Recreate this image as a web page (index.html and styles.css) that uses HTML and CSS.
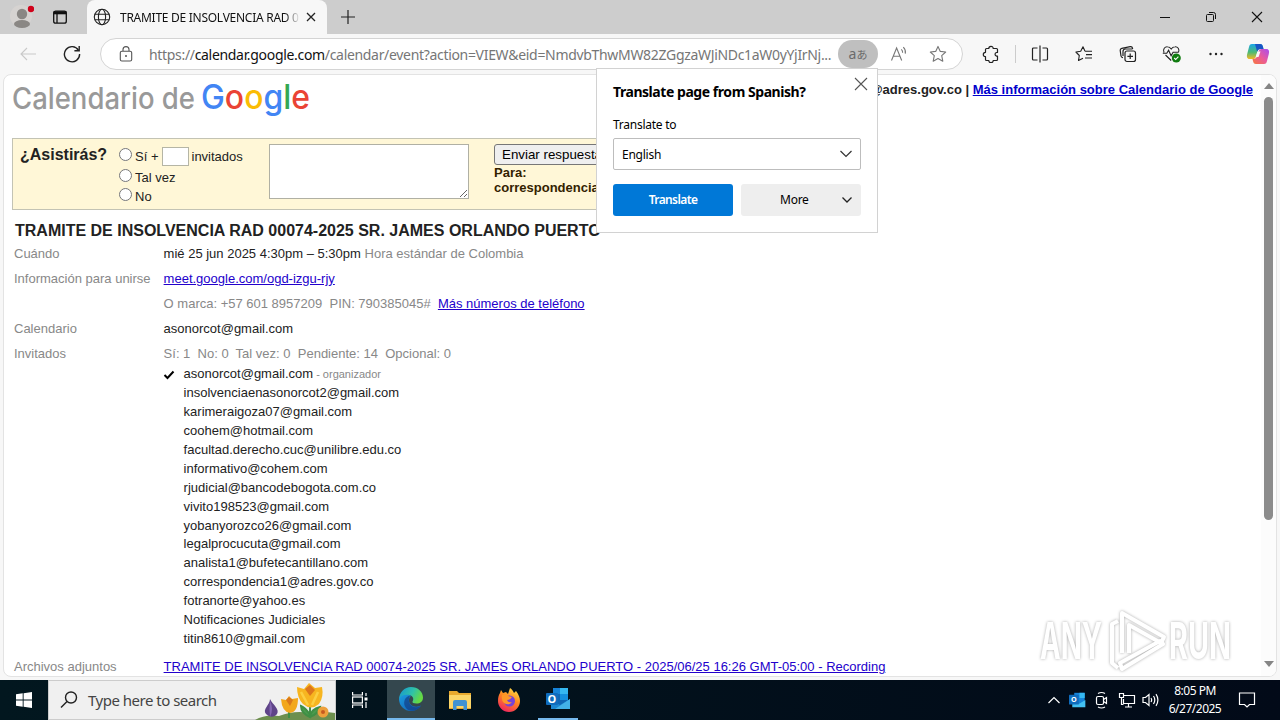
FILE: index.html
```html
<!DOCTYPE html>
<html lang="es">
<head>
    <meta charset="UTF-8">
    <meta name="viewport" content="width=device-width, initial-scale=1.0">
    <title>Calendario de Google</title>
    <link rel="stylesheet" href="styles.css">
</head>
<body>
    <div class="tabs">
        <div class="profile">
            <svg width="24" height="28" viewBox="0 0 24 28"><circle cx="11" cy="13" r="11" fill="#d6d3d1"/><circle cx="12" cy="11" r="5.2" fill="#8a8784"/><ellipse cx="12" cy="21" rx="8" ry="4" fill="#8a8784"/><circle cx="21" cy="6" r="3.2" fill="#d0021b"/></svg>
        </div>
        <div class="tab-menu">
            <svg width="16" height="16" viewBox="0 0 16 16"><rect x="1.7" y="2.2" width="12.6" height="12" rx="2" fill="none" stroke="#111" stroke-width="1.3"/><path d="M1.5 3.8h13" stroke="#111" stroke-width="3"/><path d="M5 5v9" stroke="#111" stroke-width="1.3"/></svg>
        </div>
        <div class="tab">
            <svg class="globe" width="18" height="18" viewBox="0 0 18 18" fill="none" stroke="#222" stroke-width="1.1"><circle cx="9" cy="9" r="7.7"/><ellipse cx="9" cy="9" rx="3.6" ry="7.7"/><path d="M1.8 6.3h14.4M1.8 11.7h14.4"/></svg>
            <span class="tab-title">TRAMITE DE INSOLVENCIA RAD 0</span>
            <svg class="tab-close" width="10" height="10" viewBox="0 0 10 10" stroke="#222" stroke-width="1.3"><path d="M1 1l8 8M9 1l-8 8"/></svg>
        </div>
        <svg class="new-tab" width="14" height="14" viewBox="0 0 14 14" stroke="#222" stroke-width="1.2"><path d="M7 0v14M0 7h14"/></svg>
        <div class="window-buttons">
            <div><svg width="12" height="12" viewBox="0 0 12 12" stroke="#111"><path d="M1 6.5h10"/></svg></div>
            <div><svg width="12" height="12" viewBox="0 0 12 12" stroke="#111" fill="none"><rect x="1.5" y="3.5" width="7" height="7" rx="1"/><path d="M4 1.5h4.5a2 2 0 0 1 2 2V8"/></svg></div>
            <div><svg width="12" height="12" viewBox="0 0 12 12" stroke="#111" stroke-width="1.1"><path d="M1 1l10 10M11 1L1 11"/></svg></div>
        </div>
    </div>

    <div class="toolbar">
        <div class="tool back"><svg width="18" height="18" viewBox="0 0 18 18" fill="none" stroke="#c9c9c9" stroke-width="1.1"><path d="M17 9H2M8 3L2 9l6 6"/></svg></div>
        <div class="tool"><svg width="18" height="18" viewBox="0 0 18 18" fill="none" stroke="#222" stroke-width="1.4"><path d="M15.5 5.3A7.6 7.6 0 1 0 16.6 9"/><path d="M16.2 1v4.8h-4.8"/></svg></div>
        <div class="address">
            <svg class="lock" width="14" height="16" viewBox="0 0 14 16" fill="none" stroke="#555" stroke-width="1.1"><rect x="1.3" y="5.2" width="11.4" height="9.8" rx="1.6"/><path d="M4 5V3.6a3 3 0 0 1 6 0V5"/><circle cx="7" cy="10" r="1" fill="#555" stroke="none"/></svg>
            <span class="url">https://<b>calendar.google.com</b>/calendar/event?action=VIEW&amp;eid=NmdvbThwMW82ZGgzaWJiNDc1aW0yYjIrNj...</span>
            <div class="translate-badge"><span>a</span><span class="kana">あ</span></div>
            <svg class="read" width="18" height="16" viewBox="0 0 18 16" fill="none" stroke="#777" stroke-width="1.1"><path d="M1.5 14.5L6.6 2l5.1 12.5M3.2 10.2h6.8M11.3 3.4a4 4 0 0 1 1.3 3.4M13.3 1.2a7 7 0 0 1 2 6.4"/></svg>
            <svg class="star" width="18" height="18" viewBox="0 0 18 18" fill="none" stroke="#777" stroke-width="1.1"><path d="M9 1.4l2.3 5 5.4.6-4 3.7 1.1 5.5L9 13.5l-4.8 2.7 1.1-5.5-4-3.7 5.4-.6z" stroke-linejoin="round"/></svg>
        </div>
        <div class="tool wide"><svg width="18" height="18" viewBox="0 0 18 18" fill="none" stroke="#222" stroke-width="1.2" stroke-linejoin="round"><path d="M4.500 3.500h2.300a2.200 2.200 0 0 1 4.400 0h3.300a1 1 0 0 1 1 1v3h-1a1.900 1.900 0 0 0 0 3.700h1v3.300a1 1 0 0 1-1 1h-3.300a2.200 2.200 0 0 1-4.400 0H4.500a1 1 0 0 1-1-1v-2.800a2.200 2.200 0 0 1 0-4.400V4.500a1 1 0 0 1 1-1z"/></svg></div>
        <div class="line"></div>
        <div class="tool wide"><svg width="18" height="18" viewBox="0 0 18 18" fill="none" stroke="#222" stroke-width="1.2"><path d="M6.5 3h-4a1 1 0 0 0-1 1v10a1 1 0 0 0 1 1h4M11.500 3h4a1 1 0 0 1 1 1v10a1 1 0 0 1-1 1h-4M9 .5v17"/></svg></div>
        <div class="tool wide"><svg width="18" height="18" viewBox="0 0 18 18" fill="none" stroke="#222" stroke-width="1.1" stroke-linejoin="round"><path d="M10 6.300L8 1.700 5.700 6.300.9 7l3.400 3.500-.8 5L8 13.200M10 6.300h7M11 9.600h6M10 13h7"/></svg></div>
        <div class="tool wide"><svg width="18" height="18" viewBox="0 0 18 18" fill="none" stroke="#222" stroke-width="1.2"><rect x="6" y="6" width="10.500" height="10.500" rx="2"/><path d="M11.200 8.500v5.600M8.400 11.300H14M4 12.600a2 2 0 0 1-2-1.600L1.200 5.500a2 2 0 0 1 1.600-2.200l8.400-1.700a2 2 0 0 1 2.300 1.600l.1.800M4 11V6.500a2.500 2.500 0 0 1 2.500-2.500h7"/></svg></div>
        <div class="tool wide"><svg width="20" height="18" viewBox="0 0 20 18" fill="none" stroke="#222" stroke-width="1.1"><path d="M2 7.500C.5 4 3 1.500 5.500 1.700 7.300 1.800 8.500 3 9.200 4c.8-1.200 2-2.200 3.800-2.300C15.500 1.500 18 4 16.500 7.500M3.500 10l5.700 5.500M.8 8.200h4l1.800-3 2.500 5.600 2-3.600h5"/><circle cx="14.300" cy="13" r="4.500" fill="#107c10" stroke="none"/><path d="M12.200 13l1.500 1.500 2.700-2.900" stroke="#fff"/></svg></div>
        <div class="tool wide"><svg width="18" height="4" viewBox="0 0 18 4" fill="#222"><circle cx="3.500" cy="2" r="1.200"/><circle cx="9" cy="2" r="1.200"/><circle cx="14.500" cy="2" r="1.200"/></svg></div>
        <div class="tool copilot">
            <svg width="24" height="22" viewBox="0 0 24 22">
                <defs>
                    <linearGradient id="cp1" x1="0" y1="0" x2="0" y2="1"><stop offset="0" stop-color="#1aa5e8"/><stop offset=".55" stop-color="#4cba75"/><stop offset="1" stop-color="#f5b824"/></linearGradient>
                    <linearGradient id="cp2" x1="1" y1="0" x2="0" y2="1"><stop offset="0" stop-color="#a94df0"/><stop offset=".5" stop-color="#ea5a9b"/><stop offset="1" stop-color="#f7783c"/></linearGradient>
                </defs>
                <path d="M6 1h8c2 0 2.500 1 3 3l.5 2h-3c-2 0-2.700 1-3.300 3l-1.500 5c-.5 1.500-1.500 2-3 2H3.500C1 16 .5 13.500 1.200 11L3 4c.5-2 1-3 3-3z" fill="url(#cp1)"/>
                <path d="M9 1h5c2 0 2.500 1 3 3l.5 2h-3c-2 0-2.700 1-3.300 3z" fill="#1855c5"/>
                <path d="M18 21h-8c-2 0-2.500-1-3-3l-.5-2c3 0 4-1 4.700-3l1.300-4.500C13 7 14 6 15.500 6h5C23 6 23.500 8.500 22.800 11L21 18c-.5 2-1 3-3 3z" fill="url(#cp2)"/>
                <path d="M11.500 8.500h3L12.500 14H9.800z" fill="#f7f7f7"/>
            </svg>
        </div>
    </div>

    <div class="page">
        <div class="content">
            <div class="header">
                <svg class="logo" width="300" height="44" viewBox="0 0 300 44">
                    <text class="logo-gray" x="0" y="31" textLength="183" lengthAdjust="spacingAndGlyphs">Calendario de</text>
                    <text class="logo-google" x="189" y="31" textLength="109" lengthAdjust="spacingAndGlyphs"><tspan fill="#4285f4">G</tspan><tspan fill="#ea4335">o</tspan><tspan fill="#fbbc05">o</tspan><tspan fill="#4285f4">g</tspan><tspan fill="#34a853">l</tspan><tspan fill="#ea4335">e</tspan></text>
                </svg>
                <div class="account">correspondencia1@adres.gov.co | <a href="#">Más información sobre Calendario de Google</a></div>
            </div>

            <div class="rsvp">
                <div class="question">¿Asistirás?</div>
                <div class="options">
                    <label class="yes"><input type="radio" name="rsvp"> Sí + <input type="text" class="extra"> invitados</label>
                    <label><input type="radio" name="rsvp"> Tal vez</label>
                    <label><input type="radio" name="rsvp"> No</label>
                </div>
                <textarea class="note"></textarea>
                <div class="send">
                    <button>Enviar respuesta</button>
                    <div>Para:</div>
                    <div>correspondencia1@adres.gov.co</div>
                </div>
            </div>

            <h1>TRAMITE DE INSOLVENCIA RAD 00074-2025 SR. JAMES ORLANDO PUERTO</h1>

            <div class="row"><span class="label">Cuándo</span><div>mié 25 jun 2025 4:30pm – 5:30pm <span class="gray">Hora estándar de Colombia</span></div></div>
            <div class="row"><span class="label">Información para unirse</span><div><a href="#">meet.google.com/ogd-izgu-rjy</a></div></div>
            <div class="row"><span class="label"></span><div><span class="gray">O marca: +57 601 8957209&nbsp; PIN: 790385045#&nbsp; </span><a href="#">Más números de teléfono</a></div></div>
            <div class="row"><span class="label">Calendario</span><div>asonorcot@gmail.com</div></div>
            <div class="row"><span class="label">Invitados</span><div class="gray">Sí: 1&nbsp; No: 0&nbsp; Tal vez: 0&nbsp; Pendiente: 14&nbsp; Opcional: 0</div></div>
            <ul class="guests">
                <li><svg class="check" width="12" height="10" viewBox="0 0 12 10"><path d="M1.500 5l3 3L10.500 1.500" fill="none" stroke="#000" stroke-width="2"/></svg>asonorcot@gmail.com <small>- organizador</small></li>
                <li>insolvenciaenasonorcot2@gmail.com</li>
                <li>karimeraigoza07@gmail.com</li>
                <li>coohem@hotmail.com</li>
                <li>facultad.derecho.cuc@unilibre.edu.co</li>
                <li>informativo@cohem.com</li>
                <li>rjudicial@bancodebogota.com.co</li>
                <li>vivito198523@gmail.com</li>
                <li>yobanyorozco26@gmail.com</li>
                <li>legalprocucuta@gmail.com</li>
                <li>analista1@bufetecantillano.com</li>
                <li>correspondencia1@adres.gov.co</li>
                <li>fotranorte@yahoo.es</li>
                <li>Notificaciones Judiciales</li>
                <li>titin8610@gmail.com</li>
            </ul>
            <div class="row files"><span class="label">Archivos adjuntos</span><div><a href="#">TRAMITE DE INSOLVENCIA RAD 00074-2025 SR. JAMES ORLANDO PUERTO - 2025/06/25 16:26 GMT-05:00 - Recording</a></div></div>
        </div>
        <div class="scrollbar">
            <svg width="10" height="6" viewBox="0 0 10 6"><path d="M0 6l5-6 5 6z" fill="#858585"/></svg>
            <div class="thumb"></div>
            <svg class="down" width="10" height="6" viewBox="0 0 10 6"><path d="M0 0l5 6 5-6z" fill="#858585"/></svg>
        </div>
    </div>

    <div class="popup">
        <svg class="popup-close" width="14" height="14" viewBox="0 0 14 14" stroke="#555" stroke-width="1.1"><path d="M1 1l12 12M13 1L1 13"/></svg>
        <h2>Translate page from Spanish?</h2>
        <div class="popup-label">Translate to</div>
        <div class="select"><span>English</span><svg width="14" height="8" viewBox="0 0 14 8" fill="none" stroke="#333" stroke-width="1.2"><path d="M1.500 1L7 6.500 12.500 1"/></svg></div>
        <div class="popup-buttons">
            <div class="primary">Translate</div>
            <div class="more"><span>More</span><svg width="12" height="8" viewBox="0 0 12 8" fill="none" stroke="#222" stroke-width="1.300"><path d="M1.500 1.500L6 6l4.500-4.500"/></svg></div>
        </div>
    </div>

    <svg class="watermark" width="200" height="70" viewBox="0 0 200 70">
        <text x="4" y="52" textLength="62" lengthAdjust="spacingAndGlyphs">ANY</text>
        <g fill="none" stroke="#fff" stroke-width="4" stroke-linejoin="round">
            <path d="M82 14l-6 3v39l6 5"/>
            <path d="M86 46V6l42 24-3 6-32-18v28"/>
            <path d="M84 56l40-22 3 3-41 25z"/>
        </g>
        <text x="133" y="52" textLength="62" lengthAdjust="spacingAndGlyphs">RUN</text>
    </svg>

    <div class="taskbar">
        <div class="start"><svg width="16" height="16" viewBox="0 0 16 16" fill="#fff"><path d="M0 2.300l6.700-1V7.500H0zM7.600 1.200L16 0v7.500H7.600zM0 8.500h6.700v6.200L0 13.700zM7.600 8.500H16V16l-8.400-1.200z"/></svg></div>
        <div class="search">
            <svg width="18" height="18" viewBox="0 0 18 18" fill="none" stroke="#222" stroke-width="1.400"><circle cx="11" cy="6.500" r="5.500"/><path d="M7 10.500L1 16.500"/></svg>
            <span>Type here to search</span>
            <svg class="flowers" width="80" height="39" viewBox="0 0 80 39">
                <path d="M0 39q10-6 24-4 16-6 30-3 14-2 26 0v7z" fill="#6d8f4e"/>
                <path d="M11 33c-4-5 4-9 4-15 3 6 10 10 7 15-3 4-8 3-11 0z" fill="#5f4489"/><path d="M15 20q-1 8 0 16 4-8 0-16" fill="#8567b3"/>
                <path d="M34 37V26M55 37V20M55 34q-4-7-9-9 0 7 9 11 1-8 10-10-2 7-10 10" stroke="#3f8f45" stroke-width="2" fill="#4a9b4e"/>
                <path d="M26 18l5 1 3-4 3 3 6-1q0 14-8 15-8-1-9-14z" fill="#f2a71c"/><path d="M31 19l3-3 4 3-3 6z" fill="#d9781c"/>
                <path d="M42 6l7 2 5-6 6 5 7-1q2 10-3 17-8 7-16 0-6-6-6-17z" fill="#f7b520"/><path d="M50 8l5-4 5 5-5 6z" fill="#dd761c"/><path d="M46 11l7 13M63 11l-6 13" stroke="#fccf42" stroke-width="2.500"/>
                <circle cx="68" cy="31" r="5.500" fill="#eda03c"/><circle cx="68" cy="31" r="2" fill="#c75a20"/>
            </svg>
        </div>
        <div class="task view"><svg width="16" height="18" viewBox="0 0 16 18" fill="none" stroke="#fff" stroke-width="1.200"><path d="M.6 1v3h9.800V1M.6 17v-3h9.800v3"/><rect x=".6" y="6" width="9.800" height="6"/><path d="M14 2v3M14 11v6"/><path d="M14 6.500v3" stroke-width="3"/></svg></div>
        <div class="task active">
            <svg width="26" height="26" viewBox="0 0 26 26">
                <defs>
                    <linearGradient id="eg1" x1="0" y1="0" x2="1" y2=".4"><stop offset="0" stop-color="#1593d5"/><stop offset=".6" stop-color="#2fc2a8"/><stop offset="1" stop-color="#65d944"/></linearGradient>
                    <linearGradient id="eg2" x1="0" y1="0" x2="1" y2="1"><stop offset="0" stop-color="#1b9de2"/><stop offset="1" stop-color="#1259ae"/></linearGradient>
                </defs>
                <path d="M1 13a12 12 0 0 0 12 12c4 0 8-2 10-5.500-5 2.500-12 1-12-5.500 0-2 1-3.500 2-4C9 6 2 8 1 13z" fill="url(#eg2)"/>
                <path d="M1 13C1.500 6 6.500 1 13 1c7 0 12 5 12 10.500 0 4-3 6-6.500 6-3 0-4.500-1-4-2 1.500-2 1-5.500-3-6.500C7 8 2.500 9.500 1 13z" fill="url(#eg1)"/>
                <path d="M8 22c-4-5-1-12 4.500-12.500-3 3-2 10 3.500 11.500 3 .8 5.500 0 7-1.500C19 26 11 26 8 22z" fill="#123f86" opacity=".7"/>
            </svg>
        </div>
        <div class="task"><svg width="24" height="22" viewBox="0 0 24 22"><path d="M1 2h8l2 2h12v16H1z" fill="#e8a92e"/><path d="M1 6h22v13H1z" fill="#fbd568"/><path d="M5 21v-8q0-2 2-2h10q2 0 2 2v8h-3.500v-4h-7v4z" fill="#3f92d2"/></svg></div>
        <div class="task">
            <svg width="24" height="26" viewBox="0 0 24 26">
                <defs><linearGradient id="ff" x1=".8" y1="0" x2=".3" y2="1"><stop offset="0" stop-color="#ffe14a"/><stop offset=".45" stop-color="#ff8a1f"/><stop offset="1" stop-color="#f0245f"/></linearGradient></defs>
                <path d="M3 6l1-3 2 3 3-1 2 2 2-6c2 1 3 3 4 5l2-2c3 4 4 7 4 10a11 11 0 0 1-22 0c0-3 .5-6 2-8z" fill="url(#ff)"/>
                <circle cx="12.500" cy="14" r="5.500" fill="#7543d8"/><path d="M5 8q4-2 6 1l4 1q-2 3-5 3 1 3 5 2-3 4-8 1-3-3-2-8z" fill="#ff9828"/>
            </svg>
        </div>
        <div class="task running">
            <svg width="26" height="24" viewBox="0 0 26 24"><path d="M8 1h15v18H8z" fill="#1066b5"/><path d="M8 1h7v6H8z" fill="#1683d8"/><path d="M15 1h8v6h-8z" fill="#35b8f1"/><path d="M15 7h8v6h-8z" fill="#1490df"/><path d="M6 22V13l9 5 10-6v10z" fill="#1c86d1"/><path d="M25 12v10H10z" fill="#43b1e8"/><rect x="1" y="6" width="12" height="12" rx="1" fill="#0f6cbd"/><text class="outlook-o" x="7" y="16">O</text></svg>
        </div>
        <div class="tray">
            <svg width="14" height="8" viewBox="0 0 14 8" fill="none" stroke="#fff" stroke-width="1.200"><path d="M1.500 7L7 1.500 12.500 7"/></svg>
            <svg width="17" height="18" viewBox="0 0 26 24"><path d="M8 1h16v20H8z" fill="#1683d8"/><path d="M16 1h8v8h-8z" fill="#35b8f1"/><path d="M5 23V12l10 6 10-6v11z" fill="#43c1f3"/><rect y="4" width="15" height="15" rx="1" fill="#0f6cbd"/><text class="outlook-o" x="7.500" y="15.500">O</text></svg>
            <svg width="16" height="18" viewBox="0 0 16 18" fill="none" stroke="#fff" stroke-width="1.200"><rect x="2.500" y="5.500" width="7" height="8" rx="1.500"/><path d="M9.500 8.500l3-2v6l-3-2M4 2.500q3.500-2 7 0M4 16q3.500 2 7 0"/></svg>
            <svg width="18" height="16" viewBox="0 0 18 16" fill="none" stroke="#fff" stroke-width="1.200"><path d="M6 3.500h10.500v8H5.500V7M7 15h7M10.500 12v3M1.500 1.500h4v4h-4zM3.500 5.500v7h2"/></svg>
            <svg class="sound" width="18" height="16" viewBox="0 0 18 16" fill="none" stroke="#fff" stroke-width="1.200"><path d="M1 5.500h2.500L7 2.500v11l-3.500-3H1zM9 6q1.300 2 0 4M11.500 4q2.600 4 0 8M14 2.200q3.800 5.800 0 11.600"/></svg>
            <div class="clock"><div>8:05 PM</div><div>6/27/2025</div></div>
            <svg class="notice" width="18" height="18" viewBox="0 0 18 18" fill="none" stroke="#fff" stroke-width="1.200"><path d="M1.500 2h15v11.500h-5L9 16l-2.500-2.500h-5z"/></svg>
        </div>
    </div>
</body>
</html>
```
FILE: styles.css
```css
* {
    box-sizing: border-box;
}

body {
    margin: 0;
    width: 1280px;
    height: 720px;
    overflow: hidden;
    background: #f7f7f7;
    font-family: "Noto Sans", "Open Sans", sans-serif;
    font-size: 12px;
    color: #111;
    position: relative;
}

svg {
    display: block;
    flex: none;
}

/* browser */
.tabs {
    display: flex;
    align-items: center;
    height: 34px;
    background: #cdcdcd;
}

.profile {
    width: 41px;
    padding-left: 10px;
}

.tab-menu {
    width: 46px;
    height: 34px;
    padding: 9px 0 0 11px;
}

.tab {
    display: flex;
    align-items: center;
    width: 240px;
    height: 34px;
    padding-left: 6px;
    background: #f7f7f7;
    border-radius: 8px 8px 0 0;
}

.tab-title {
    width: 179px;
    margin: 0 7px 0 9px;
    overflow: hidden;
    white-space: nowrap;
    letter-spacing: -0.27px;
    -webkit-mask-image: linear-gradient(to right, #000 165px, transparent 180px);
    mask-image: linear-gradient(to right, #000 165px, transparent 180px);
}

.new-tab {
    margin-left: 14px;
}

.window-buttons {
    display: flex;
    margin-left: auto;
}

.window-buttons div {
    display: flex;
    justify-content: center;
    width: 46px;
}

.toolbar {
    display: flex;
    align-items: center;
    height: 40px;
    background: #f7f7f7;
}

.tool {
    display: flex;
    justify-content: center;
    width: 44px;
}

.tool.back {
    margin-left: 6px;
}

.tool.copilot {
    width: 40px;
}

.line {
    width: 1px;
    height: 18px;
    margin: 0 2px;
    background: #ccc;
}

.address {
    display: flex;
    align-items: center;
    width: 863px;
    height: 32px;
    margin: 0 6px;
    background: #fff;
    border: 1px solid #d4d4d4;
    border-radius: 16px;
}

.lock {
    margin-left: 18px;
}

.url {
    width: 689px;
    margin-left: 16px;
    font-size: 14px;
    white-space: nowrap;
    color: #767676;
    letter-spacing: -0.32px;
}

.url b {
    font-weight: normal;
    color: #111;
}

.translate-badge {
    display: flex;
    align-items: center;
    justify-content: center;
    width: 40px;
    height: 28px;
    border-radius: 14px;
    background: #bfbfbf;
    color: #6b6b6b;
    font-size: 14px;
    line-height: 28px;
}

.kana {
    font-family: "Noto Sans CJK JP", sans-serif;
    font-size: 11px;
}

.read {
    margin-left: 12px;
}

.star {
    margin-left: 21px;
}

/* event page */
.page {
    display: flex;
    justify-content: space-between;
    height: 603px;
    margin: 0 3px;
    background: #fff;
    border: 1px solid #e3e3e3;
    border-radius: 8px;
    overflow: hidden;
    font-family: "Liberation Sans", Arial, sans-serif;
    font-size: 13px;
    color: #222;
}

.content {
    width: 1249px;
    padding-left: 8px;
}

.content a {
    color: #20c;
}

.header {
    display: flex;
    justify-content: space-between;
    height: 63px;
}

.logo {
    margin-top: 3px;
    font-family: Inter, sans-serif;
}

.logo-gray {
    font-size: 30px;
    font-weight: 500;
    fill: #999;
}

.logo-google {
    font-size: 34px;
    font-weight: 500;
}

.account {
    padding-top: 7px;
    font-weight: bold;
}

.account a {
    color: #00c;
}

.rsvp {
    display: flex;
    width: 700px;
    height: 72px;
    padding: 5px 7px;
    background: #fff7d7;
    border: 1px solid #c3c3b4;
    color: #332200;
}

.question {
    width: 96px;
    padding-top: 2px;
    font-size: 16px;
    font-weight: bold;
    color: #222;
}

.options {
    width: 153px;
    padding-top: 1px;
    color: #222;
}

.options label {
    display: flex;
    align-items: center;
    gap: 3px;
    height: 19px;
}

.options label.yes {
    height: 23px;
}

.options input[type="radio"] {
    width: 13px;
    height: 13px;
    margin: -4px 0 0 3px;
}

.extra {
    width: 27px;
    height: 19px;
    border: 1px solid #b5b5a5;
}

.note {
    width: 200px;
    height: 55px;
    border: 1px solid #b0b0a4;
}

.send {
    margin-left: 25px;
    font-weight: bold;
    line-height: 15px;
}

.send button {
    display: block;
    height: 21px;
    padding: 0 7px;
    border: 1px solid #777;
    border-radius: 3px;
    background: #efefef;
    font-family: inherit;
    font-size: 13.33px;
    white-space: nowrap;
}

h1 {
    margin: 12px 0 5px 3px;
    font-size: 16px;
    line-height: 18px;
    white-space: nowrap;
}

.row {
    display: flex;
    height: 25px;
    padding-left: 2px;
    line-height: 18px;
    white-space: nowrap;
}

.label {
    width: 149.6px;
    color: #888;
}

.gray {
    color: #888;
}

.guests {
    margin: -5px 0 0;
    padding: 0 0 0 171.6px;
    list-style: none;
    line-height: 18.93px;
}

.guests li {
    display: flex;
}

.guests small {
    margin-left: 3px;
    font-size: 11px;
    color: #888;
}

.check {
    margin: 5px 9px 0 -21px;
}

.files {
    margin-top: 9px;
}

.scrollbar {
    display: flex;
    flex-direction: column;
    align-items: center;
    width: 15px;
    padding: 8px 0 9px;
    background: #fcfcfc;
}

.thumb {
    width: 9px;
    height: 423px;
    margin-top: 8px;
    background: #8b8b8b;
    border-radius: 5px;
}

.down {
    margin-top: auto;
}

/* translate popup */
.popup {
    position: absolute;
    left: 596px;
    top: 68px;
    width: 282px;
    height: 165px;
    padding: 14px 16px;
    background: #fff;
    border: 1px solid #d2d2d2;
    color: #000;
    letter-spacing: -0.25px;
}

.popup-close {
    position: absolute;
    right: 9px;
    top: 8px;
}

.popup h2 {
    margin: 0;
    font-size: 14px;
    line-height: 18px;
    letter-spacing: -0.45px;
    white-space: nowrap;
}

.popup-label {
    margin: 16px 0 5px;
    line-height: 16px;
}

.select {
    display: flex;
    align-items: center;
    justify-content: space-between;
    height: 32px;
    padding: 0 7px 0 8px;
    border: 1px solid #bdbdbd;
    border-radius: 2px;
}

.popup-buttons {
    display: flex;
    gap: 8px;
    margin-top: 14px;
    line-height: 32px;
}

.primary {
    width: 120px;
    height: 32px;
    border-radius: 3px;
    background: #0078d7;
    color: #fff;
    font-weight: 600;
    letter-spacing: -0.6px;
    text-align: center;
}

.more {
    display: flex;
    align-items: center;
    justify-content: space-between;
    width: 120px;
    height: 32px;
    padding: 0 8px 0 39px;
    border-radius: 3px;
    background: #eee;
}

.watermark {
    position: absolute;
    left: 1036px;
    top: 607px;
    font-family: Inter, sans-serif;
    font-size: 51px;
    font-weight: 700;
    fill: #fff;
    filter: drop-shadow(0 0 1.5px #aaa);
}

/* taskbar */
.taskbar {
    position: absolute;
    left: 0;
    bottom: 0;
    display: flex;
    width: 1280px;
    height: 40px;
    background: linear-gradient(to right, #02171f, #020a18);
}

.start {
    display: flex;
    align-items: center;
    justify-content: center;
    width: 48px;
}

.search {
    display: flex;
    align-items: center;
    width: 288px;
    height: 40px;
    padding-left: 11px;
    background: #f0f0f0;
    border: 1px solid #ccc;
    font-size: 15px;
    color: #444;
}

.search span {
    width: 168px;
    margin-left: 10px;
    letter-spacing: -0.5px;
    white-space: nowrap;
}

.task {
    display: flex;
    align-items: center;
    justify-content: center;
    width: 49px;
    height: 40px;
}

.view {
    width: 51px;
    padding-right: 3px;
}

.active {
    width: 48px;
    background: #34474e;
    border-bottom: 2px solid #76b9ed;
}

.running {
    width: 40px;
    margin-left: 5px;
    border-bottom: 2px solid #76b9ed;
}

.outlook-o {
    font-family: "Open Sans", sans-serif;
    font-size: 11px;
    font-weight: bold;
    fill: #fff;
    text-anchor: middle;
}

.tray {
    display: flex;
    align-items: center;
    gap: 8px;
    margin-left: auto;
    padding-right: 24px;
    color: #fff;
}

.sound {
    margin-left: -2px;
}

.clock {
    width: 54px;
    line-height: 18px;
    text-align: center;
    letter-spacing: -0.5px;
}

.notice {
    margin-left: 8px;
}
```
